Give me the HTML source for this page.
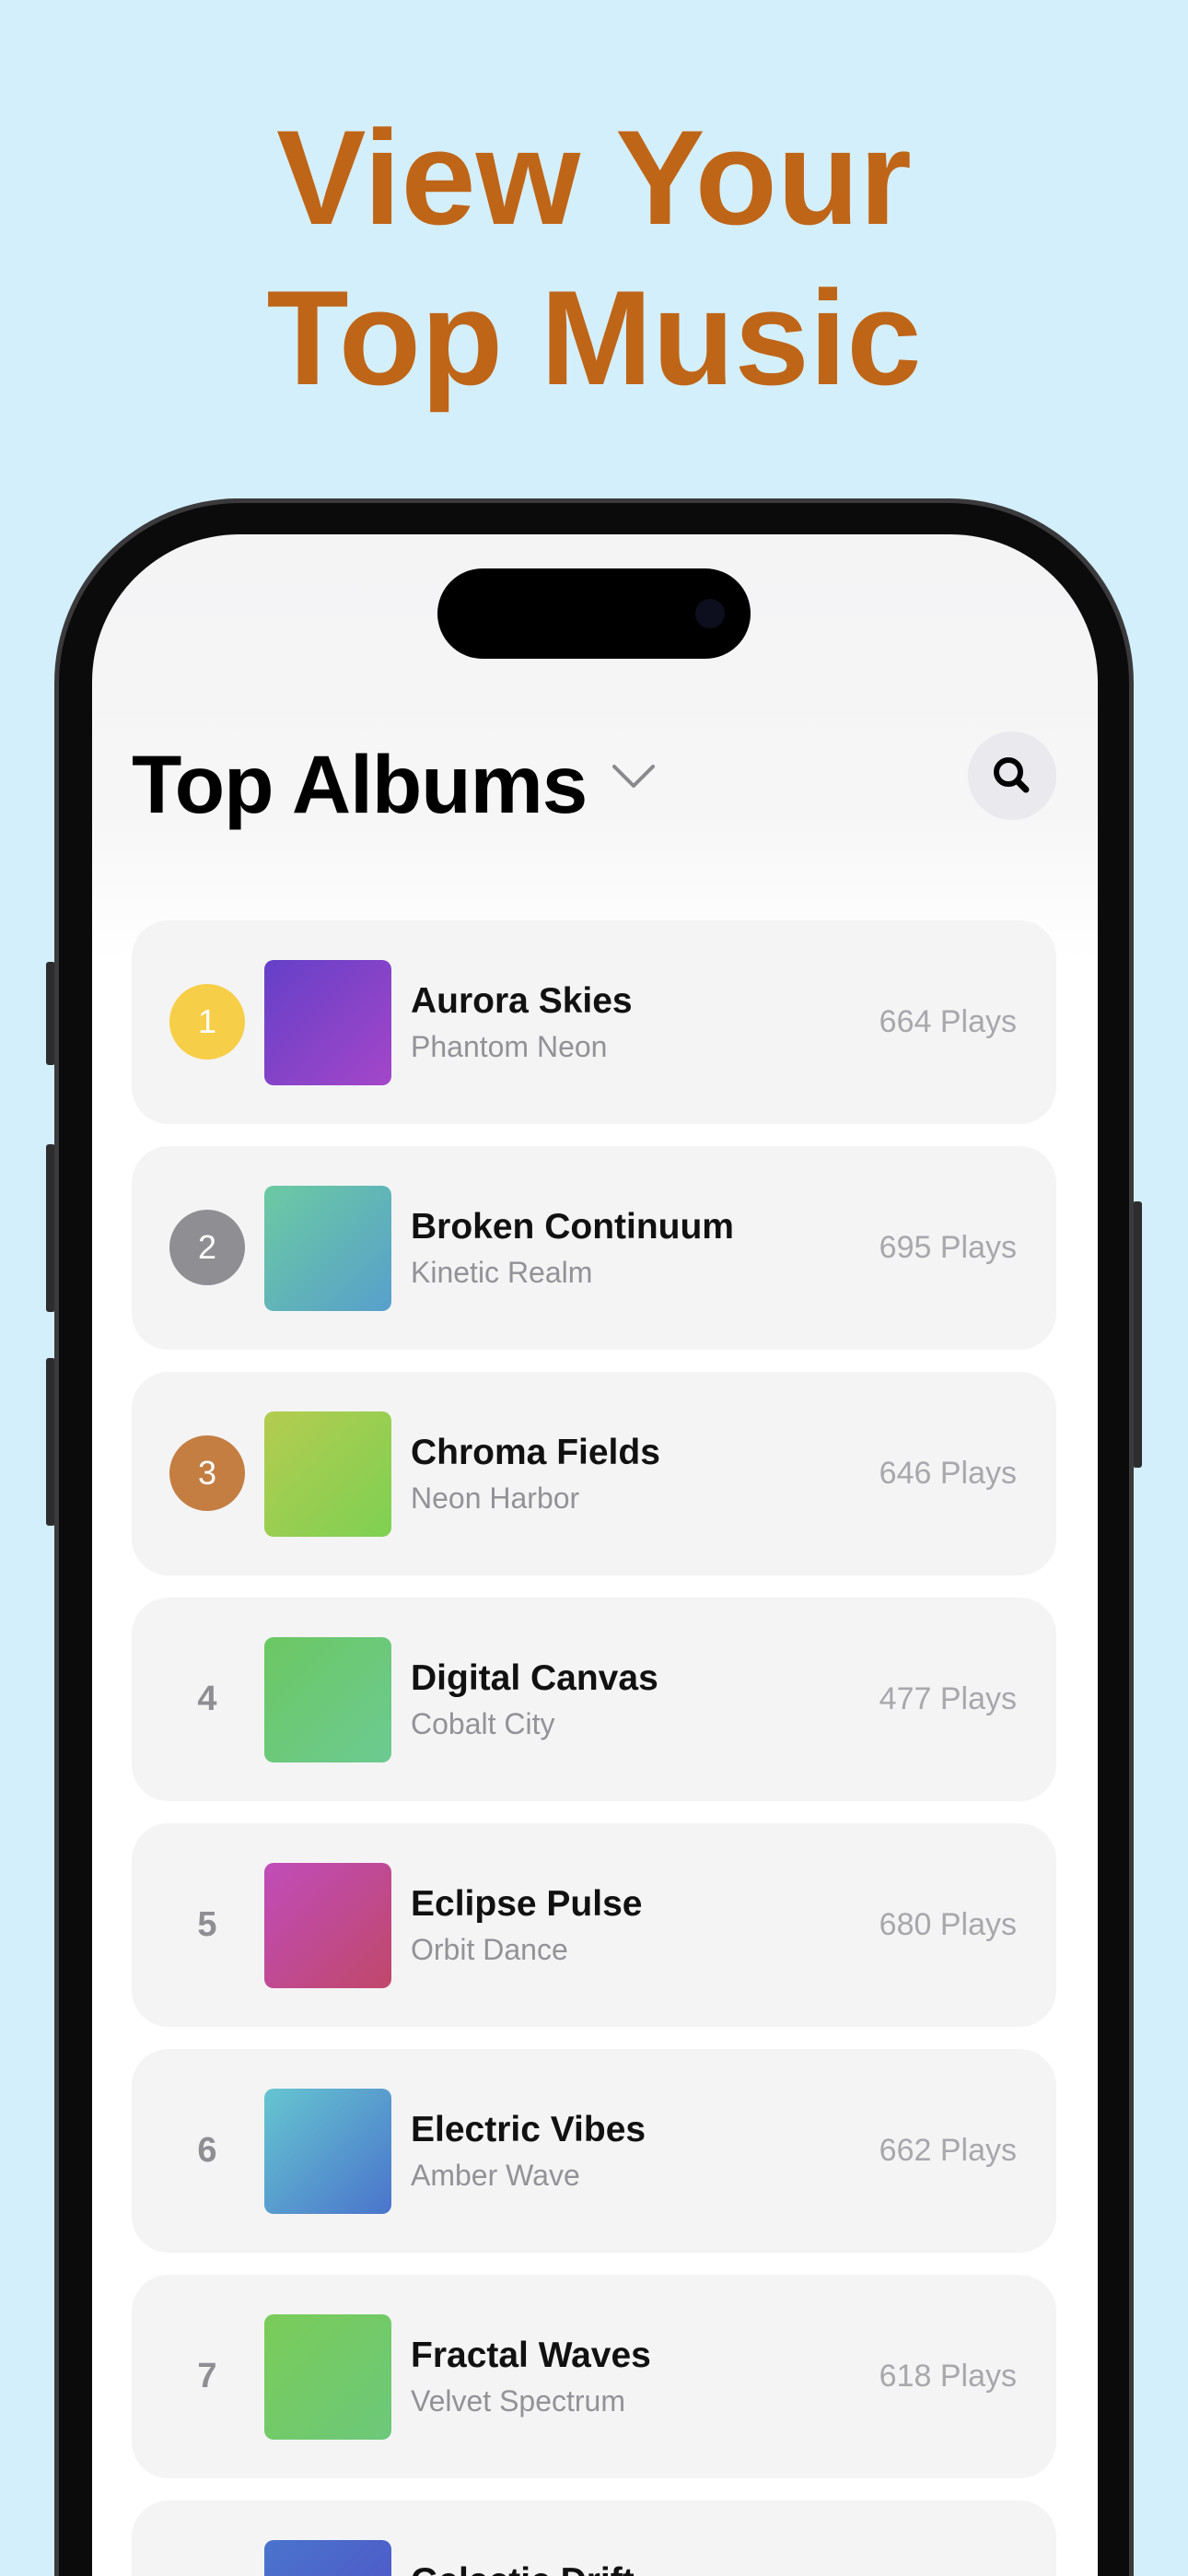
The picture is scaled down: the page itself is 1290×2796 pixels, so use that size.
<!DOCTYPE html>
<html style="width:1290px;height:2796px;overflow:hidden"><head><meta charset="utf-8"><style>
*{margin:0;padding:0;box-sizing:border-box}
body{width:1290px;height:2796px;background:#D4EFFC;position:relative;overflow:hidden;font-family:"Liberation Sans",sans-serif}
.h{position:absolute;left:0;width:1290px;text-align:center;color:#BF6518;font-weight:bold;font-size:146px;line-height:174px;top:106px;letter-spacing:0px}
.phone{position:absolute;left:59px;top:541px;width:1172px;height:2255px;border-radius:200px 200px 0 0;background:#3a3a3c;}
.phone2{position:absolute;left:64px;top:546px;width:1162px;height:2250px;border-radius:196px 196px 0 0;background:#0b0b0b;}
.screen{position:absolute;left:100px;top:580px;width:1092px;height:2216px;border-radius:160px 160px 0 0;background:linear-gradient(#f4f4f5 0px,#f6f6f7 300px,#ffffff 460px);overflow:hidden}
.btn{position:absolute;background:#2d2d2f;border-radius:3px}
.island{position:absolute;left:375px;top:37px;width:340px;height:98px;border-radius:49px;background:#000}
.cam{position:absolute;left:280px;top:33px;width:32px;height:32px;border-radius:50%;background:#0d0f1e}
.title{position:absolute;left:43px;top:220px;font-size:89px;font-weight:bold;color:#000;letter-spacing:-1px}
.search{position:absolute;left:951px;top:214px;width:96px;height:96px;border-radius:50%;background:#e9e9ee}
.card{position:absolute;left:43px;width:1004px;height:221px;border-radius:40px;background:#f4f4f5}
.rank{position:absolute;left:41px;top:69px;width:82px;height:82px;border-radius:50%;color:#fff;font-size:36px;text-align:center;line-height:82px}
.num{position:absolute;left:41px;top:69px;width:82px;height:82px;color:#8e8e93;font-size:38px;text-align:center;line-height:82px;font-weight:bold}
.art{position:absolute;left:144px;top:43px;width:138px;height:136px;border-radius:10px}
.t{position:absolute;left:303px;top:66px;font-size:39px;font-weight:bold;color:#111;white-space:nowrap}
.s{position:absolute;left:303px;top:119px;font-size:32px;color:#929297;white-space:nowrap}
.p{position:absolute;right:43px;top:91px;font-size:34px;color:#a8a8ac;white-space:nowrap}
</style></head><body>
<div class="h">View Your<br>Top Music</div>
<div class="btn" style="left:50px;top:1044px;width:10px;height:112px"></div>
<div class="btn" style="left:50px;top:1242px;width:10px;height:182px"></div>
<div class="btn" style="left:50px;top:1474px;width:10px;height:182px"></div>
<div class="btn" style="left:1230px;top:1304px;width:10px;height:289px"></div>
<div class="phone"></div><div class="phone2"></div>
<div class="screen">
<div class="island"><div class="cam"></div></div>
<div class="title">Top Albums</div>
<svg style="position:absolute;left:564px;top:248px" width="48" height="30" viewBox="0 0 48 30"><path d="M3 4 L24 25 L45 4" fill="none" stroke="#8a8a8e" stroke-width="4" stroke-linecap="round" stroke-linejoin="round"/></svg>
<div class="search"><svg width="96" height="96" viewBox="0 0 96 96"><circle cx="44" cy="44" r="13" fill="none" stroke="#000" stroke-width="6"/><path d="M54 54 L63 63" stroke="#000" stroke-width="7" stroke-linecap="round"/></svg></div>

<div class="card" style="top:419px"><div class="rank" style="background:#F7CE48">1</div><div class="art" style="background:linear-gradient(135deg,#6440C8,#A446C9)"></div><div class="t">Aurora Skies</div><div class="s">Phantom Neon</div><div class="p">664 Plays</div></div>
<div class="card" style="top:664px"><div class="rank" style="background:#8E8E93">2</div><div class="art" style="background:linear-gradient(135deg,#6CCAA2,#57A0CC)"></div><div class="t">Broken Continuum</div><div class="s">Kinetic Realm</div><div class="p">695 Plays</div></div>
<div class="card" style="top:909px"><div class="rank" style="background:#C47E42">3</div><div class="art" style="background:linear-gradient(135deg,#B4CC50,#7ED052)"></div><div class="t">Chroma Fields</div><div class="s">Neon Harbor</div><div class="p">646 Plays</div></div>
<div class="card" style="top:1154px"><div class="num">4</div><div class="art" style="background:linear-gradient(135deg,#6CC862,#6CCA92)"></div><div class="t">Digital Canvas</div><div class="s">Cobalt City</div><div class="p">477 Plays</div></div>
<div class="card" style="top:1399px"><div class="num">5</div><div class="art" style="background:linear-gradient(135deg,#C04CBA,#C0486A)"></div><div class="t">Eclipse Pulse</div><div class="s">Orbit Dance</div><div class="p">680 Plays</div></div>
<div class="card" style="top:1644px"><div class="num">6</div><div class="art" style="background:linear-gradient(135deg,#66C6D0,#4A74CC)"></div><div class="t">Electric Vibes</div><div class="s">Amber Wave</div><div class="p">662 Plays</div></div>
<div class="card" style="top:1889px"><div class="num">7</div><div class="art" style="background:linear-gradient(135deg,#7ACC58,#6CC87A)"></div><div class="t">Fractal Waves</div><div class="s">Velvet Spectrum</div><div class="p">618 Plays</div></div>
<div class="card" style="top:2134px"><div class="num">8</div><div class="art" style="background:linear-gradient(135deg,#4A74CC,#5050C8)"></div><div class="t">Galactic Drift</div><div class="s">Nova Lights</div><div class="p">590 Plays</div></div>
</div>
</body></html>
